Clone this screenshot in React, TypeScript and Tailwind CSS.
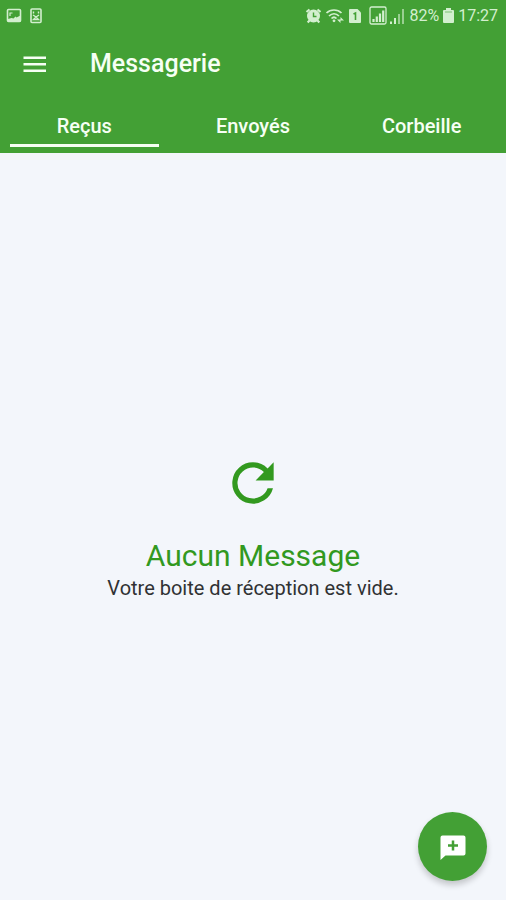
import { useState } from "react"
import { clsx } from "clsx"

const tabs = ["Reçus", "Envoyés", "Corbeille"]

function StatusBar() {
  return (
    <div className="flex h-8 items-center justify-between pl-1.5 pr-2 text-[#d3efcf]">
      <div className="flex items-center gap-2">
        <svg className="h-4 w-4" viewBox="0 0 16 16" fill="none" stroke="currentColor">
          <rect x="1.5" y="1.5" width="13" height="12" rx="1" strokeWidth="1.6" />
          <path d="M2 14v-3l3.500-1 2 .5 2-2 1 1 4-2V14z" fill="currentColor" stroke="none" />
          <path d="M4 8V5h2.500" strokeWidth="1.2" />
        </svg>
        <svg className="h-4 w-3" viewBox="0 0 12 16" fill="none" stroke="currentColor">
          <rect x="1" y="1" width="10" height="13.500" rx="1" strokeWidth="1.6" />
          <path d="M3.500 3.500v2M8.500 3.500v2M3 7l3 2 3-2M6 9l-2.500 2.500h5z" strokeWidth="1.4" />
        </svg>
      </div>
      <div className="flex items-center gap-1">
        <svg className="h-4 w-4" viewBox="0 0 16 16" fill="none" stroke="currentColor">
          <circle cx="8.5" cy="8" r="6.500" fill="currentColor" stroke="none" />
          <path d="M1.500 4 4.500 1.500M12.500 1.500 15.500 4M4.500 12.500l-1.800 2M12.500 12.500l1.800 2" strokeWidth="2.2" />
          <path d="M8.500 4.500v4h3" stroke="#43a035" strokeWidth="1.4" />
        </svg>
        <svg className="h-4 w-5" viewBox="0 0 20 16" fill="none" stroke="currentColor">
          <path d="M1.500 5C5.500 1 12.500 1 16.500 5M4 8c3-3 7-3 10 0M6.500 10.500c1.500-1.500 3.500-1.500 5 0" strokeWidth="1.7" />
          <circle cx="9" cy="12.800" r="1.400" fill="currentColor" stroke="none" />
          <path d="M12 11.500h3.500V15zM15.500 9l3.500 3.500h-3.500z" fill="currentColor" stroke="none" />
        </svg>
        <svg className="h-4 w-3" viewBox="0 0 12 16">
          <path d="M0 2a1 1 0 0 1 1-1h7.500L12 4.500V14a1 1 0 0 1-1 1H1a1 1 0 0 1-1-1z" fill="currentColor" />
          <path d="M4.500 6 6.500 5v7" fill="none" stroke="#43a035" strokeWidth="1.600" />
        </svg>
        <svg className="ml-1 h-5 w-[36px]" viewBox="0 0 36 20" fill="none" stroke="currentColor">
          <rect x="1" y="1" width="16" height="17" rx="1.500" strokeWidth="1.300" />
          <path d="M4.500 16v-3M7.800 16v-5.500M11 16V7.500M14.200 16V4.500" strokeWidth="2.200" />
          <path d="M22 18v-2.500M26 18v-6" strokeWidth="2" />
          <path d="M30 18V8M34 18V3" strokeWidth="2" opacity="0.600" />
        </svg>
        <span className="text-base">82%</span>
        <svg className="h-4 w-[11px]" viewBox="0 0 11 16" fill="currentColor">
          <path d="M3 0h5v2h2a1 1 0 0 1 1 1v11a1 1 0 0 1-1 1H1a1 1 0 0 1-1-1V3a1 1 0 0 1 1-1h2z" />
          <path d="M2 3.500h7v1H2z" fill="#43a035" opacity="0.600" />
        </svg>
        <span className="text-base">17:27</span>
      </div>
    </div>
  )
}

function EmptyInbox() {
  return (
    <main className="flex flex-1 flex-col items-center justify-center text-center">
      <button type="button" aria-label="Actualiser" className="text-[#32991f]">
        <svg className="size-[62px]" viewBox="0 0 24 24" fill="currentColor">
          <path d="M17.650 6.350A7.958 7.958 0 0 0 12 4a8 8 0 1 0 7.730 10h-2.080A6 6 0 1 1 12 6c1.660 0 3.140.690 4.220 1.780L13 11h7V4z" />
        </svg>
      </button>
      <h2 className="mt-6 text-[30px] leading-9 text-[#32991f]">Aucun Message</h2>
      <p className="text-xl leading-7 text-[#303234]">Votre boite de réception est vide.</p>
    </main>
  )
}

export default function App() {
  const [active, setActive] = useState(tabs[0])

  return (
    <div className="flex min-h-screen flex-col bg-[#f3f6fb] font-[Roboto,sans-serif]">
      <header className="bg-[#43a035] text-[#f6fff4]">
        <StatusBar />
        <div className="flex h-16 items-center gap-8 pl-[18px]">
          <button type="button" aria-label="Menu" className="p-1">
            <svg className="h-6 w-8" viewBox="0 0 32 24" fill="currentColor">
              <path d="M1.500 4.500H24V7H1.500zM1.500 11H24v2.500H1.500zM1.500 17.500H24V20H1.500z" />
            </svg>
          </button>
          <h1 className="text-[25px] font-medium">Messagerie</h1>
        </div>
        <div role="tablist" className="grid grid-cols-3">
          {tabs.map((tab) => (
            <button
              key={tab}
              type="button"
              role="tab"
              aria-selected={active === tab}
              onClick={() => setActive(tab)}
              className="px-2.5 pb-1.5 pt-4 text-xl font-medium"
            >
              <span
                className={clsx(
                  "block border-b-3 pb-1",
                  active === tab ? "border-[#f6fff4]" : "border-transparent"
                )}
              >
                {tab}
              </span>
            </button>
          ))}
        </div>
      </header>
      <EmptyInbox />
      <button
        type="button"
        aria-label="Nouveau message"
        className="fixed bottom-[19px] right-[19px] flex size-[69px] items-center justify-center rounded-full bg-[#43a035] shadow-[0_4px_6px_rgba(0,0,0,0.2)]"
      >
        <svg className="size-8" viewBox="0 0 32 32">
          <path d="M5.500 4.500h21a2 2 0 0 1 2 2v16a2 2 0 0 1-2 2H8.500l-5 4.500V6.500a2 2 0 0 1 2-2z" fill="#fff" />
          <path d="M16 9.500v10M11 14.500h10" stroke="#43a035" strokeWidth="2.500" />
        </svg>
      </button>
    </div>
  )
}
